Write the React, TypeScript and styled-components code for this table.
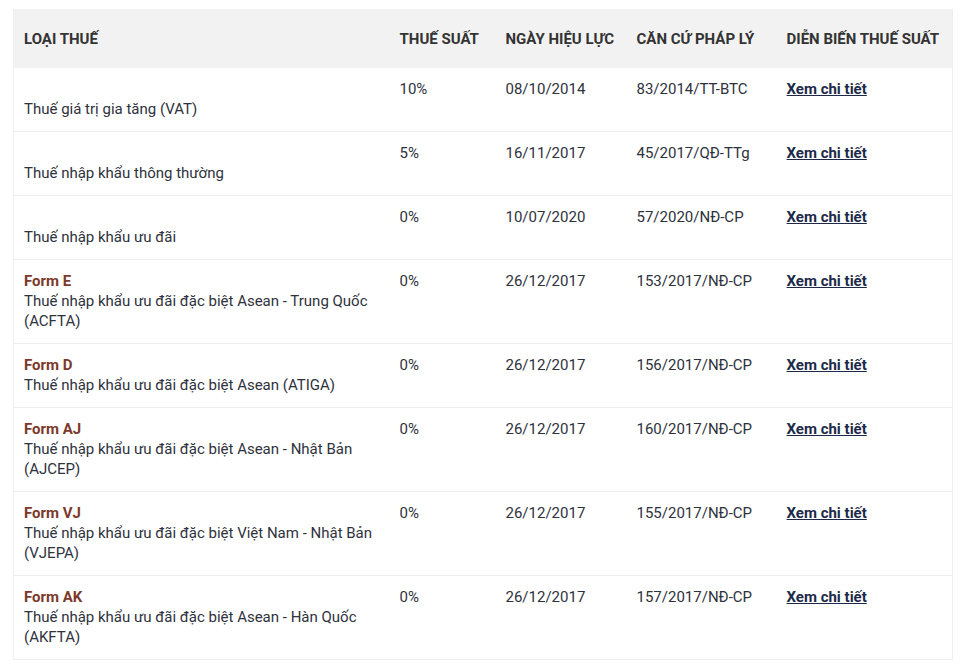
import React from 'react'
import styled, { createGlobalStyle } from 'styled-components'

const GlobalStyle = createGlobalStyle`
  body {
    margin: 0;
    background: #fff;
    font-family: Roboto, 'Noto Sans', 'Liberation Sans', sans-serif;
  }
`

const Page = styled.div`
  padding: 9px 13px 0 13px;
`

const Table = styled.table`
  width: 939px;
  border-collapse: collapse;
  table-layout: fixed;
  font-size: 15px;
  line-height: 20px;
  color: #2e323c;
  border-left: 1px solid #f0f0f0;
  border-right: 1px solid #eeeeee;
`

const HeadCell = styled.th<{ w: number }>`
  width: ${(p) => p.w}px;
  height: 59px;
  padding: 0 10px;
  background: #f2f2f2;
  text-align: left;
  font-weight: 700;
  color: #333;
  text-transform: uppercase;
  white-space: nowrap;
  box-sizing: border-box;
`

const Row = styled.tr`
  border-bottom: 1px solid #efefef;
`

const Cell = styled.td`
  vertical-align: top;
  padding: 11px 10px 12px 10px;
`

const FormLabel = styled.div`
  font-weight: 700;
  color: #7b3a2c;
  min-height: 20px;
`

const Link = styled.a`
  font-weight: 700;
  color: #1c2a48;
  text-decoration: underline;
  cursor: pointer;
`

type Item = { form: string; name: string; rate: string; date: string; ref: string }

const items: Item[] = [
  { form: '', name: 'Thuế giá trị gia tăng (VAT)', rate: '10%', date: '08/10/2014', ref: '83/2014/TT-BTC' },
  { form: '', name: 'Thuế nhập khẩu thông thường', rate: '5%', date: '16/11/2017', ref: '45/2017/QĐ-TTg' },
  { form: '', name: 'Thuế nhập khẩu ưu đãi', rate: '0%', date: '10/07/2020', ref: '57/2020/NĐ-CP' },
  { form: 'Form E', name: 'Thuế nhập khẩu ưu đãi đặc biệt Asean - Trung Quốc (ACFTA)', rate: '0%', date: '26/12/2017', ref: '153/2017/NĐ-CP' },
  { form: 'Form D', name: 'Thuế nhập khẩu ưu đãi đặc biệt Asean (ATIGA)', rate: '0%', date: '26/12/2017', ref: '156/2017/NĐ-CP' },
  { form: 'Form AJ', name: 'Thuế nhập khẩu ưu đãi đặc biệt Asean - Nhật Bản (AJCEP)', rate: '0%', date: '26/12/2017', ref: '160/2017/NĐ-CP' },
  { form: 'Form VJ', name: 'Thuế nhập khẩu ưu đãi đặc biệt Việt Nam - Nhật Bản (VJEPA)', rate: '0%', date: '26/12/2017', ref: '155/2017/NĐ-CP' },
  { form: 'Form AK', name: 'Thuế nhập khẩu ưu đãi đặc biệt Asean - Hàn Quốc (AKFTA)', rate: '0%', date: '26/12/2017', ref: '157/2017/NĐ-CP' },
]

export default function App() {
  return (
    <Page>
      <GlobalStyle />
      <Table>
        <thead>
          <tr>
            <HeadCell w={376}>Loại thuế</HeadCell>
            <HeadCell w={106}>Thuế suất</HeadCell>
            <HeadCell w={131}>Ngày hiệu lực</HeadCell>
            <HeadCell w={150}>Căn cứ pháp lý</HeadCell>
            <HeadCell w={176}>Diễn biến thuế suất</HeadCell>
          </tr>
        </thead>
        <tbody>
          {items.map((it, i) => (
            <Row key={i}>
              <Cell>
                <FormLabel>{it.form}</FormLabel>
                <div>{it.name}</div>
              </Cell>
              <Cell>{it.rate}</Cell>
              <Cell>{it.date}</Cell>
              <Cell>{it.ref}</Cell>
              <Cell>
                <Link>Xem chi tiết</Link>
              </Cell>
            </Row>
          ))}
        </tbody>
      </Table>
    </Page>
  )
}
